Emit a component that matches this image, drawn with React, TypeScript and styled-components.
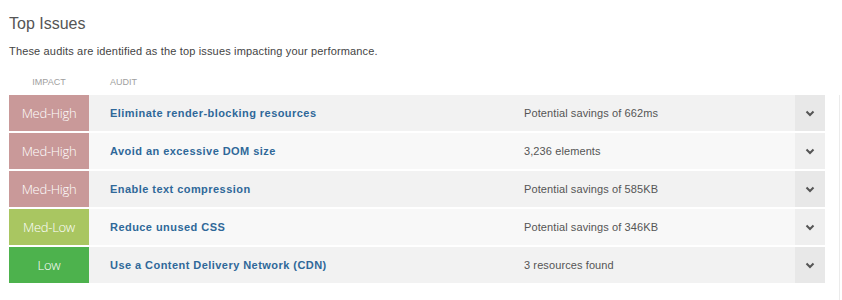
import React from 'react';
import styled, { createGlobalStyle } from 'styled-components';

// --- Types ---
type Impact = 'Med-High' | 'Med-Low' | 'Low';

interface Issue {
  impact: Impact;
  title: string;
  detail: string;
}

const issues: Issue[] = [
  { impact: 'Med-High', title: 'Eliminate render-blocking resources', detail: 'Potential savings of 662ms' },
  { impact: 'Med-High', title: 'Avoid an excessive DOM size', detail: '3,236 elements' },
  { impact: 'Med-High', title: 'Enable text compression', detail: 'Potential savings of 585KB' },
  { impact: 'Med-Low', title: 'Reduce unused CSS', detail: 'Potential savings of 346KB' },
  { impact: 'Low', title: 'Use a Content Delivery Network (CDN)', detail: '3 resources found' },
];

const impactColors: Record<Impact, string> = {
  'Med-High': '#c99999',
  'Med-Low': '#a9c661',
  Low: '#4db24d',
};

// --- Styled Components ---
const GlobalStyle = createGlobalStyle`
  body {
    margin: 0;
    background: #fff;
    font-family: "Liberation Sans", Arial, sans-serif;
  }
`;

const Page = styled.div`
  padding: 14px 0 0 9px;
`;

const Title = styled.h2`
  margin: 0;
  font-size: 16px;
  line-height: 20px;
  font-weight: normal;
  color: #555;
`;

const Description = styled.p`
  margin: 10px 0 0;
  font-size: 11px;
  line-height: 14px;
  letter-spacing: 0.16px;
  color: #444;
`;

const Table = styled.div`
  margin-top: 15px;
  width: 831px;
`;

const HeaderRow = styled.div`
  display: grid;
  grid-template-columns: 80px 1fr;
  height: 18px;
  align-items: center;
  margin-bottom: 4px;
`;

const HeaderCell = styled.div<{ $center?: boolean }>`
  font-size: 9px;
  text-transform: uppercase;
  color: #a0a0a0;
  text-align: ${(p) => (p.$center ? 'center' : 'left')};
  padding-left: ${(p) => (p.$center ? '0' : '21px')};
`;

const Rows = styled.div`
  display: flex;
  flex-direction: column;
  gap: 2px;
  padding: 0 14px 20px 0;
  border-right: 1px solid #ebebeb;
`;

const Row = styled.div<{ $alt: boolean }>`
  display: grid;
  grid-template-columns: 80px 1fr 271px 30px;
  height: 36px;
  align-items: stretch;
  background: ${(p) => (p.$alt ? '#f8f8f8' : '#f2f2f2')};
`;

const ImpactCell = styled.div<{ $color: string }>`
  display: flex;
  align-items: center;
  justify-content: center;
  background: ${(p) => p.$color};
  color: #fff;
  font-family: "Open Sans", "Liberation Sans", sans-serif;
  font-weight: 300;
  font-size: 13px;
  letter-spacing: -0.3px;
`;

const AuditTitle = styled.div`
  display: flex;
  align-items: center;
  padding-left: 21px;
  font-size: 11px;
  font-weight: bold;
  letter-spacing: 0.45px;
  color: #2f6899;
`;

const Detail = styled.div`
  display: flex;
  align-items: center;
  font-size: 11px;
  letter-spacing: 0.1px;
  color: #555;
`;

const Toggle = styled.div<{ $alt: boolean }>`
  display: flex;
  align-items: center;
  justify-content: center;
  background: ${(p) => (p.$alt ? '#efefef' : '#e8e8e8')};
  color: #555;
`;

const Chevron = () => (
  <svg width="10" height="7" viewBox="0 0 10 7">
    <path d="M1.5 1.5 L5 5 L8.5 1.5" fill="none" stroke="currentColor" strokeWidth="2" />
  </svg>
);

// --- Main Component ---
const App = () => (
  <>
    <GlobalStyle />
    <Page>
      <Title>Top Issues</Title>
      <Description>
        These audits are identified as the top issues impacting your performance.
      </Description>
      <Table>
        <HeaderRow>
          <HeaderCell $center>Impact</HeaderCell>
          <HeaderCell>Audit</HeaderCell>
        </HeaderRow>
        <Rows>
          {issues.map((issue, i) => (
            <Row key={issue.title} $alt={i % 2 === 1}>
              <ImpactCell $color={impactColors[issue.impact]}>{issue.impact}</ImpactCell>
              <AuditTitle>{issue.title}</AuditTitle>
              <Detail>{issue.detail}</Detail>
              <Toggle $alt={i % 2 === 1}>
                <Chevron />
              </Toggle>
            </Row>
          ))}
        </Rows>
      </Table>
    </Page>
  </>
);

export default App;
